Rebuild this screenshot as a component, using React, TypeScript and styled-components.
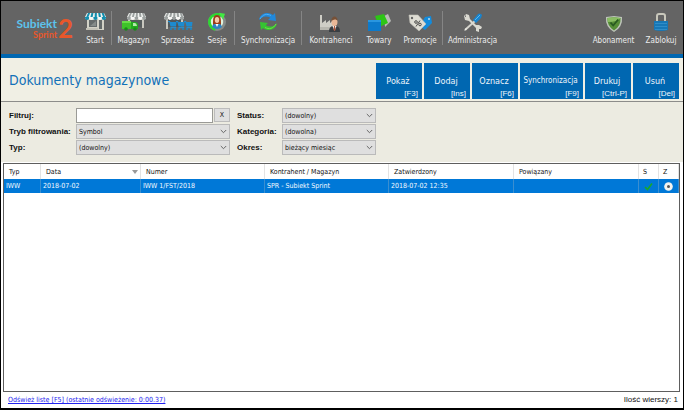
import React from "react";
import styled, { createGlobalStyle, css } from "styled-components";

const ui = `"DejaVu Sans Condensed", "DejaVu Sans", "Noto Sans", sans-serif`;
const arial = `"Liberation Sans", Arial, sans-serif`;

const GlobalStyle = createGlobalStyle`
  * { box-sizing: border-box; }
  body { margin: 0; background: #000; }
  button, input, select { font: inherit; color: inherit; border-radius: 0; margin: 0; padding: 0; }
`;

const Window = styled.div`
  display: flex;
  flex-direction: column;
  min-height: 100vh;
  padding: 1px 1px 2px;
  background: #000;
  font: 7px/12px ${ui};
  color: #111;
`;

const Toolbar = styled.header`
  display: flex;
  align-items: flex-start;
  height: 57px;
  padding: 10px 2px 0 14px;
  background: #646464;
  border-bottom: 4px solid #0067b1;
  color: #ececec;
  font-size: 8px;
`;

const Logo = styled.a`
  display: flex;
  align-items: center;
  width: 64px;
  margin-top: 5px;
  text-decoration: none;
  font-family: Lato, "Noto Sans", sans-serif;
  font-weight: 700;
`;

const LogoWords = styled.span`
  display: flex;
  flex-direction: column;
  align-items: flex-end;
  width: 42px;
`;

const LogoName = styled.span`
  color: #5cc3ec;
  font-size: 12px;
  line-height: 13px;
`;

const LogoEdition = styled.span`
  color: #e8572a;
  font-size: 9px;
  line-height: 9px;
`;

const LogoNumber = styled.span`
  margin-left: 1px;
  color: #e8572a;
  font-size: 26px;
  line-height: 24px;
`;

const Tools = styled.nav`
  display: flex;
  align-items: flex-start;
`;

const RightTools = styled(Tools)`
  margin-left: auto;
`;

const ToolButton = styled.button<{ $width: number }>`
  display: flex;
  flex-direction: column;
  align-items: center;
  width: ${(p) => p.$width}px;
  border: 0;
  background: none;
  white-space: nowrap;
  line-height: 12px;

  svg { display: block; height: 24px; }
`;

const Divider = styled.span`
  width: 1px;
  height: 34px;
  background: #858585;
`;

const TitleBar = styled.div`
  display: flex;
  align-items: flex-start;
  justify-content: space-between;
  height: 44px;
  padding: 5px 4px 0 8px;
  background: #f0efe4;
  border-bottom: 1px solid #8c8c8a;
`;

const Title = styled.h1`
  margin: 8px 0 0;
  color: #1271b8;
  font-size: 14px;
  font-weight: 400;
  line-height: 18px;
  white-space: nowrap;
`;

const Actions = styled.div`
  display: flex;
  gap: 2px;
`;

const ActionButton = styled.button<{ $wide?: boolean }>`
  display: flex;
  flex-direction: column;
  justify-content: flex-end;
  width: ${(p) => (p.$wide ? 63 : 46)}px;
  height: 36px;
  padding: 0 4px 0 0;
  border: 0;
  background: #0067b1;
  color: #eef5fb;
  white-space: nowrap;
`;

const ActionLabel = styled.span<{ $small?: boolean }>`
  padding-left: 2px;
  text-align: center;
  font-size: ${(p) => (p.$small ? 8 : 9)}px;
  line-height: 14px;
`;

const Shortcut = styled.span`
  text-align: right;
  font-family: ${arial};
  font-size: 8px;
  line-height: 11px;
`;

const Filters = styled.form`
  display: grid;
  grid-template-columns: 67px 154px 52px 94px;
  row-gap: 1px;
  align-items: center;
  align-content: start;
  height: 60px;
  padding: 6px 0 0 8px;
  background: #ecebe1;
`;

const FilterLabel = styled.label<{ $second?: boolean }>`
  padding-left: ${(p) => (p.$second ? 7 : 0)}px;
  font-family: ${arial};
  font-size: 8px;
  font-weight: 700;
  line-height: 15px;
  white-space: nowrap;
`;

const SearchBox = styled.div`
  display: flex;
  gap: 1px;
  height: 15px;
`;

const SearchInput = styled.input`
  flex: 1;
  min-width: 0;
  height: 15px;
  border: 1px solid #9a9a96;
  background: #fff;
`;

const ClearButton = styled.button`
  width: 16px;
  height: 14px;
  border: 1px solid #bcbcbc;
  background: #dfdfdf;
  line-height: 12px;
`;

const SelectBox = styled.div`
  display: grid;
  align-items: center;

  > * { grid-area: 1 / 1; }
  > svg { justify-self: end; margin-right: 3px; pointer-events: none; }
`;

const Select = styled.select`
  width: 100%;
  height: 15px;
  padding: 1px 14px 0 2px;
  appearance: none;
  border: 1px solid #bababa;
  background: #dfdfdf;
`;

const TablePanel = styled.main`
  flex: 1;
  display: flex;
  padding: 1px 3px 0 2px;
  background: #fff;
`;

const TableFrame = styled.div`
  flex: 1;
  border: 1px solid #5e5e5e;
  background: #fff;
`;

const Table = styled.table`
  width: 100%;
  table-layout: fixed;
  border-collapse: separate;
  border-spacing: 0;
`;

const cell = css`
  padding: 0;
  font-weight: 400;
  line-height: 14px;
  text-align: left;
  white-space: nowrap;
`;

const Th = styled.th<{ $mark?: boolean }>`
  ${cell}
  height: 15px;
  padding-left: ${(p) => (p.$mark ? 4 : 5)}px;
  border-right: 1px solid #e3e3e3;
`;

const SortRow = styled.span`
  display: flex;
  align-items: center;
  justify-content: space-between;
  padding-right: 2px;
`;

const Td = styled.td`
  ${cell}
  height: 14px;
  padding-left: 2px;
  border-right: 1px solid #3a8ed0;
  background: #0078d7;
  color: #f4faff;

  svg { display: block; margin-left: 3px; }
`;

const Footer = styled.footer`
  display: flex;
  justify-content: space-between;
  align-items: flex-start;
  height: 16px;
  padding: 2px 5px 0 7px;
  background: #fff;
`;

const RefreshLink = styled.a`
  color: #2222f0;
  text-decoration: underline;
  text-underline-offset: 1px;
`;

const Count = styled.span`
  font-family: ${arial};
  font-size: 8px;
`;

const Awning = ({ x, y, w, color }: { x: number; y: number; w: number; color: string }) => {
  const n = 5;
  const s = w / n;
  return (
    <g>
      <path d={`M${x + 2} ${y}h${w - 4}l2 4v2h-${w}v-2z`} fill="#eef0ee" />
      {Array.from({ length: n }, (_, i) => (
        <React.Fragment key={i}>
          <path d={`M${x + 2 + (i * (w - 4)) / n + 1} ${y}h${s / 2}L${x + i * s + s * 0.8} ${y + 4}h-${s * 0.5}z`} fill={color} />
          <path d={`M${x + i * s} ${y + 4}h${s}v1a${s / 2} 2 0 0 1-${s} 0z`} fill={i % 2 ? "#f7f7f5" : color} />
        </React.Fragment>
      ))}
    </g>
  );
};

const StartIcon = () => (
  <svg width="22" height="24" viewBox="0 0 22 24" aria-hidden="true">
    <path d="M3 7h17v12H3z" fill="#d2d1c6" />
    <path d="M5 9h8v7H5zM15 9h3v9h-3z" fill="#656b6b" />
    <path d="M6 15l6-5v5z" fill="#858b89" />
    <path d="M2 17h12v2H2z" fill="#c2c1b6" />
    <Awning x={1} y={2} w={21} color="#138eae" />
  </svg>
);

const StoreIcon = () => (
  <svg width="26" height="24" viewBox="0 0 26 24" aria-hidden="true">
    <path d="M7 7h16v10h-2V9H9v5H7z" fill="#c8c7bf" />
    <path d="M9 9h12v7H9z" fill="#565c5d" />
    <Awning x={6} y={2} w={19} color="#9ba09f" />
    <path d="M1 10h9v8H1z" fill="#3fc32a" />
    <path d="M10 11h4q3 0 3 3v4h-7z" fill="#23ac1e" />
    <path d="M12 12h2q1.500 0 2 3h-4z" fill="#b4e7ab" />
    <path d="M1 10h9v2H1z" fill="#67de48" />
    <circle cx="5" cy="18" r="1.800" fill="#198d18" /><circle cx="14" cy="18" r="1.800" fill="#198d18" />
  </svg>
);

const SalesIcon = () => (
  <svg width="30" height="24" viewBox="0 0 30 24" aria-hidden="true">
    <path d="M3 7h2v11H3zM18 7h2v5h-2z" fill="#c8c7bf" />
    <path d="M5 8h13v8H5z" fill="#50575a" />
    <Awning x={1} y={2} w={20} color="#9ba09f" />
    {[5, 13, 21].map((x) => (
      <g key={x} transform={`translate(${x} 10)`}>
        <path d="M0 0h2l.4 1H8.500L8 5.500H2.500L1.300 1H0z" fill="#1d8bcf" />
        <path d="M2.500 6.700h5.700" stroke="#2596d8" />
        <circle cx="3" cy="8" r="1" fill="#1688ca" /><circle cx="7" cy="8" r="1" fill="#1688ca" />
      </g>
    ))}
  </svg>
);

const SessionIcon = () => (
  <svg width="20" height="24" viewBox="0 0 20 24" aria-hidden="true">
    <circle cx="10" cy="11" r="9" fill="#868a87" />
    <path d="M10 11L15 3.500A9 9 0 1 0 8 19.800z" fill="#2cd831" />
    <path d="M12 1.800l6 1-2 6z" fill="#42e943" />
    <circle cx="10" cy="11" r="6.200" fill="#dff3de" />
    <path d="M6 14c0-6 0-10 4-10s4 4 4 10z" fill="#9b3c18" />
    <ellipse cx="10" cy="9" rx="2.200" ry="3" fill="#f5c9aa" />
    <path d="M5 16c1-4 3-3 5-3s4-1 5 3a7 7 0 0 1-10 0z" fill="#2e83c2" />
    <path d="M8.500 13h3L10 16z" fill="#fff" />
  </svg>
);

const SyncIcon = () => (
  <svg width="20" height="24" viewBox="0 0 20 24" aria-hidden="true">
    <path d="M1 9c1-7 9-9 14-5l2-2 1 8-8-1 2.300-2.300C8.500 4.500 4.500 5 1 9z" fill="#2088db" />
    <path d="M2 8c3-5 7-5.500 11-3.500" fill="none" stroke="#4caff2" />
    <path d="M19 12c-1 7-9 9-14 5l-2 2-1-8 8 1-2.300 2.300c3.800 2.200 7.800 1.700 11.300-2.300z" fill="#35c431" />
    <path d="M18 13c-3 5-7 5.500-11 3.500" fill="none" stroke="#70df45" />
  </svg>
);

const ClientsIcon = () => (
  <svg width="28" height="24" viewBox="0 0 28 24" aria-hidden="true">
    <path d="M3 19V4h2v8l4-3v3l4-3v3l4-3v10z" fill="#cfcec6" />
    <path d="M3 19h13v-3H3z" fill="#b8b7af" />
    <path d="M12 21c0-5 2-6 5.500-6s5.500 1 5.500 6z" fill="#393e43" />
    <path d="M15.500 15h4L17.500 20z" fill="#f7f7f7" />
    <path d="M17 15h1l.6 4-1.100 1-1-1z" fill="#a85238" />
    <ellipse cx="17.500" cy="11" rx="3" ry="4" fill="#e9b797" />
    <path d="M14.300 10c0-6 6.400-6 6.400 0-1.500-2-4-2-6.400 0z" fill="#765138" />
  </svg>
);

const GoodsIcon = () => (
  <svg width="24" height="24" viewBox="0 0 24 24" aria-hidden="true">
    <path d="M17 5l4-2 3 7-6 6z" fill="#b9bbb7" />
    <path d="M8 5l9-2 4 9-9 4z" fill="#2dc516" />
    <path d="M1 9h13v11H1z" fill="#0c7acb" />
    <path d="M1 9h13v2H1z" fill="#2996df" />
  </svg>
);

const TagIcon = () => (
  <svg width="26" height="24" viewBox="0 0 26 24" aria-hidden="true">
    <path d="M18 6l6-1 1 7-7 7-5-4z" fill="#128bdc" />
    <circle cx="22" cy="8" r="1" fill="#b9dbee" />
    <path d="M2 4l9 0 8 9-7 7L3 12z" fill="#deddd4" stroke="#c1c0b7" strokeWidth=".6" />
    <circle cx="5" cy="7" r="1.200" fill="#646464" />
    <g fill="none" stroke="#4d4d4b"><circle cx="9" cy="11" r="1.300" /><circle cx="13" cy="13.500" r="1.300" /><path d="M13 9.500l-4 6" /></g>
  </svg>
);

const AdminIcon = () => (
  <svg width="22" height="24" viewBox="0 0 22 24" aria-hidden="true">
    <path d="M3 19L13 10" stroke="#d4d3cb" strokeWidth="2" />
    <path d="M11 9l5-6q1-1 3 0l1 1-1 3-5 5z" fill="#1784cf" />
    <path d="M13 9l5-5" stroke="#62b8eb" />
    <path d="M4 3L2 5l1 4 4 1 7 7 0 3 3 1v-3h2l1-2-3-2-3 0-6-6-1-4-3-1 0 3-1 0z" fill="#dad9d1" />
    <path d="M2 20l2-3 1 1z" fill="#f3f2ea" />
  </svg>
);

const ShieldIcon = () => (
  <svg width="18" height="24" viewBox="0 0 18 24" aria-hidden="true">
    <path d="M9 5l8 1q1 10-8 15Q0 16 1 6z" fill="#bfc5bb" />
    <path d="M9 6.300l6.600.8Q16 15.300 9 19.500 2 15.300 2.400 7.100z" fill="#568e36" />
    <path d="M9 6.300l6.600.8Q12 11 2.900 11L2.400 7.100z" fill="#8abd63" />
    <path d="M5.500 11.500l2.700 3 5-6" fill="none" stroke="#285a20" strokeWidth="1.800" />
  </svg>
);

const LockIcon = () => (
  <svg width="16" height="24" viewBox="0 0 16 24" aria-hidden="true">
    <path d="M4 11V5q0-2 2-2h4q2 0 2 2v6" fill="none" stroke="#c8c7bb" strokeWidth="2" />
    <path d="M1 10h14v9q-7 2-14 0z" fill="#1778b7" />
    <path d="M2 12.500h12M2 15.500h12M2 18.500h12" stroke="#2f8dc8" />
  </svg>
);

const Chevron = () => (
  <svg width="7" height="5" viewBox="0 0 7 5" aria-hidden="true"><path d="M.8 1l2.700 2.700L6.200 1" fill="none" stroke="#666" /></svg>
);

const Tool = ({ label, width, children }: { label: string; width: number; children: React.ReactNode }) => (
  <ToolButton type="button" $width={width}>{children}<span>{label}</span></ToolButton>
);

const Choice = ({ id, label, value, second }: { id: string; label: string; value: string; second?: boolean }) => (
  <>
    <FilterLabel htmlFor={id} $second={second}>{label}</FilterLabel>
    <SelectBox><Select id={id}><option>{value}</option></Select><Chevron /></SelectBox>
  </>
);

const actions = [
  ["Pokaż", "[F3]"], ["Dodaj", "[Ins]"], ["Oznacz", "[F6]"],
  ["Synchronizacja", "[F9]"], ["Drukuj", "[Ctrl-P]"], ["Usuń", "[Del]"],
];

export default function App() {
  return (
    <>
      <GlobalStyle />
      <Window>
        <Toolbar>
          <Logo href="#" aria-label="Subiekt Sprint 2">
            <LogoWords><LogoName>Subiekt</LogoName><LogoEdition>Sprint</LogoEdition></LogoWords>
            <LogoNumber>2</LogoNumber>
          </Logo>
          <Tools>
            <Tool label="Start" width={32}><StartIcon /></Tool>
            <Divider />
            <Tool label="Magazyn" width={43}><StoreIcon /></Tool>
            <Tool label="Sprzedaż" width={45}><SalesIcon /></Tool>
            <Tool label="Sesje" width={34}><SessionIcon /></Tool>
            <Divider />
            <Tool label="Synchronizacja" width={66}><SyncIcon /></Tool>
            <Divider />
            <Tool label="Kontrahenci" width={58}><ClientsIcon /></Tool>
            <Tool label="Towary" width={38}><GoodsIcon /></Tool>
            <Tool label="Promocje" width={44}><TagIcon /></Tool>
            <Divider />
            <Tool label="Administracja" width={59}><AdminIcon /></Tool>
          </Tools>
          <RightTools>
            <Tool label="Abonament" width={55}><ShieldIcon /></Tool>
            <Tool label="Zablokuj" width={40}><LockIcon /></Tool>
          </RightTools>
        </Toolbar>

        <TitleBar>
          <Title>Dokumenty magazynowe</Title>
          <Actions>
            {actions.map(([label, key]) => (
              <ActionButton key={label} type="button" $wide={label.length > 10}>
                <ActionLabel $small={label.length > 10}>{label}</ActionLabel>
                <Shortcut>{key}</Shortcut>
              </ActionButton>
            ))}
          </Actions>
        </TitleBar>

        <Filters onSubmit={(e) => e.preventDefault()}>
          <FilterLabel htmlFor="filter">Filtruj:</FilterLabel>
          <SearchBox>
            <SearchInput id="filter" type="text" />
            <ClearButton type="button">X</ClearButton>
          </SearchBox>
          <Choice id="status" label="Status:" value="(dowolny)" second />
          <Choice id="mode" label="Tryb filtrowania:" value="Symbol" />
          <Choice id="category" label="Kategoria:" value="(dowolna)" second />
          <Choice id="type" label="Typ:" value="(dowolny)" />
          <Choice id="period" label="Okres:" value="bieżący miesiąc" second />
        </Filters>

        <TablePanel>
          <TableFrame>
            <Table>
              <colgroup>
                <col width="37" /><col width="100" /><col width="124" /><col /><col width="125" /><col width="125" /><col width="20" /><col width="20" />
              </colgroup>
              <thead>
                <tr>
                  <Th>Typ</Th>
                  <Th><SortRow>Data<svg width="6" height="4" viewBox="0 0 6 4" aria-hidden="true"><path d="M0 0h6L3 4z" fill="#999" /></svg></SortRow></Th>
                  <Th>Numer</Th>
                  <Th>Kontrahent / Magazyn</Th>
                  <Th>Zatwierdzony</Th>
                  <Th>Powiązany</Th>
                  <Th $mark>S</Th>
                  <Th $mark>Z</Th>
                </tr>
              </thead>
              <tbody>
                <tr>
                  <Td>IWW</Td>
                  <Td>2018-07-02</Td>
                  <Td>IWW 1/FST/2018</Td>
                  <Td>SPR - Subiekt Sprint</Td>
                  <Td>2018-07-02 12:35</Td>
                  <Td />
                  <Td><svg width="9" height="9" viewBox="0 0 9 9" role="img" aria-label="Tak"><path d="M1 5l2.500 2.500L8 1.500" fill="none" stroke="#18a82c" strokeWidth="1.700" /></svg></Td>
                  <Td><svg width="9" height="9" viewBox="0 0 9 9" role="img" aria-label="Zatwierdzony"><circle cx="4.500" cy="4.500" r="4.300" fill="#f4f4f0" /><circle cx="4.500" cy="4.500" r="1.500" fill="#555" /></svg></Td>
                </tr>
              </tbody>
            </Table>
          </TableFrame>
        </TablePanel>

        <Footer>
          <RefreshLink href="#">Odśwież listę [F5] (ostatnie odświeżenie: 0:00.37)</RefreshLink>
          <Count>Ilość wierszy: 1</Count>
        </Footer>
      </Window>
    </>
  );
}
